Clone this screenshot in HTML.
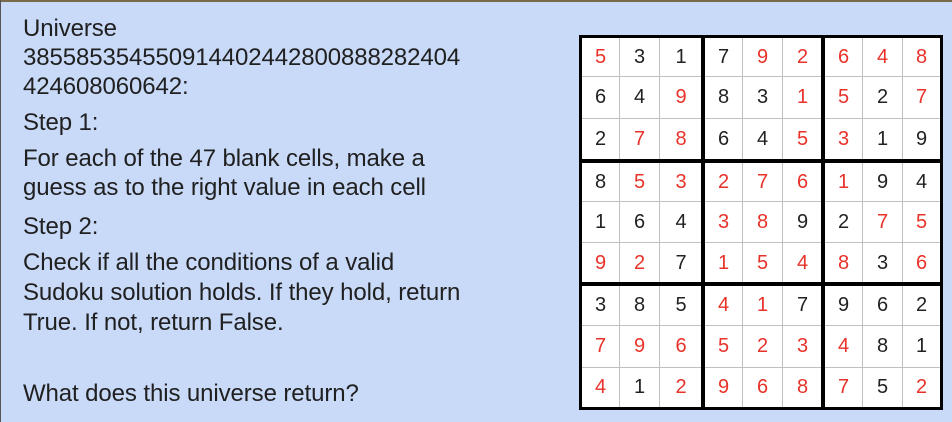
<!DOCTYPE html>
<html><head><meta charset="utf-8"><style>
html,body{margin:0;padding:0}
body{width:952px;height:422px;background:#c9daf8;position:relative;overflow:hidden;font-family:"Liberation Sans",sans-serif;color:#202020}
.top{position:absolute;left:0;top:0;width:952px;height:2px;background:#7a6a4a}
.lft{position:absolute;left:0;top:0;width:1px;height:422px;background:#555}
.t{position:absolute;left:23px;font-size:24px;white-space:nowrap;line-height:26px;letter-spacing:-0.1px}
.grid{position:absolute;left:579px;top:35px;width:364px;height:375px;background:#c0c0c0}
.c{position:absolute;background:#fff;font-size:20px;text-align:center;color:#222}
.r{color:#e8322a}
.k{position:absolute;background:#000}
</style></head><body>
<div class="top"></div><div class="lft"></div>
<div class="t" style="top:16px">Universe</div>
<div class="t" style="top:45px">385585354550914402442800888282404</div>
<div class="t" style="top:74px">424608060642:</div>
<div class="t" style="top:110px">Step 1:</div>
<div class="t" style="top:146px">For each of the 47 blank cells, make a</div>
<div class="t" style="top:175px">guess as to the right value in each cell</div>
<div class="t" style="top:214px">Step 2:</div>
<div class="t" style="top:250px">Check if all the conditions of a valid</div>
<div class="t" style="top:280px">Sudoku solution holds. If they hold, return</div>
<div class="t" style="top:310px">True. If not, return False.</div>
<div class="t" style="top:381px">What does this universe return?</div>
<div class="grid" id="g"></div>
<script>
var v=["531792648","649831527","278645319","853276194","164389275","927154836","385417962","796523481","412968752"];
var red=["100011111","001001101","011001100","011111100","000110011","110111101","000110000","111111100","101111101"];
var xs=[0,40,80,123,163,203,243,283,323,364];
var ys=[0,41,83,125,166,207,248,290,332,375];
var g=document.getElementById('g'),h='';
for(var r=0;r<9;r++)for(var c=0;c<9;c++){
 var l=xs[c]+(c%3==0?3:1),rr=xs[c+1]-(c==8?3:0),t=ys[r]+(r%3==0?3:1),b=ys[r+1]-(r==8?3:0);
 h+='<div class="c'+(red[r][c]=='1'?' r':'')+'" style="left:'+l+'px;top:'+t+'px;width:'+(rr-l)+'px;height:'+(b-t)+'px;line-height:'+(b-t)+'px">'+v[r][c]+'</div>';
}
[0,3,6].forEach(function(i){h+='<div class="k" style="left:'+(xs[i]-(i?1:0))+'px;top:0;width:'+(i?4:3)+'px;height:375px"></div>';h+='<div class="k" style="top:'+(ys[i]-(i?1:0))+'px;left:0;height:'+(i?4:3)+'px;width:364px"></div>';});
h+='<div class="k" style="left:361px;top:0;width:3px;height:375px"></div><div class="k" style="top:372px;left:0;height:3px;width:364px"></div>';
g.innerHTML=h;
</script>
</body></html>
